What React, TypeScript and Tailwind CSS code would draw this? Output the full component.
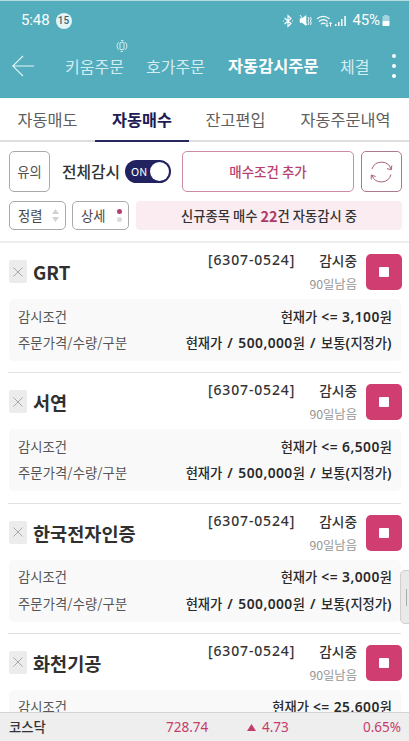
import type { ReactNode } from "react";

const orders = [
  { name: "GRT", price: "3,100" },
  { name: "서연", price: "6,500" },
  { name: "한국전자인증", price: "3,000" },
  { name: "화천기공", price: "25,600" },
];

const StatusBar = () => (
  <div className="flex h-[39px] items-center pl-[21px] pr-[19px]">
    <span className="font-['Roboto'] text-[15px] tracking-[-0.1px]">5:48</span>
    <span className="ml-[6px] flex h-4 w-4 items-center justify-center rounded-full bg-[#e4f5f7] font-['Roboto'] text-[10px] font-medium text-[#37656e]">
      15
    </span>
    <svg className="ml-auto" width="12" height="14" viewBox="0 0 12 14" fill="none" stroke="white" strokeWidth="1.1">
      <path d="M2.5 4 9 9.5 6 12.5v-11l3 3L2.5 10M1 7h1M10 7h1" />
    </svg>
    <svg className="ml-[5px]" width="13" height="13" viewBox="0 0 13 13" fill="white" stroke="white">
      <path d="M1 4.5h2L7 1.5v10L3 8.5H1z" strokeWidth=".5" />
      <path d="m1 1 7 10M9 3l1 2-1 2 1 2-1 2M11.5 3l.7 2-.7 2 .7 2-.7 2" fill="none" strokeWidth=".9" />
    </svg>
    <svg className="ml-[4px]" width="17" height="14" viewBox="0 0 17 14" fill="none" stroke="white" strokeWidth="1.2">
      <path d="M1 4.800q6-5 12.500 0M3 7.500q4.500-3.700 8.500 0M5 10.200q2.500-2 4.500 0" />
      <path d="M11 8.500v4M9.700 11.200l1.300 1.500 1.300-1.500M14.500 12.500v-4M13.200 9.800l1.300-1.500 1.300 1.500" strokeWidth="1" />
    </svg>
    <svg className="ml-[2px]" width="12" height="12" viewBox="0 0 12 12" fill="white">
      <path d="M0 9h1.500v2H0zM3 7h1.500v4H3zM6 4h1.500v7H6zM9.300 1h1.500v10H9.300z" />
    </svg>
    <span className="ml-[5px] font-['Roboto'] text-[15px] tracking-[-0.1px]">45%</span>
    <svg className="ml-[2px]" width="8" height="13" viewBox="0 0 8 13">
      <path d="M2 1h4v1h1.500v5H.5V2H2z" fill="#a2d4dc" />
      <path d="M.5 7h7v4q0 1-1 1h-5q-1 0-1-1z" fill="white" />
    </svg>
  </div>
);

const Header = () => (
  <header className="h-[98px] shrink-0 border-t border-[#b6dce2] bg-[#54adbd] text-white">
    <StatusBar />
    <nav className="flex h-[51px] items-center whitespace-nowrap pl-[12px] text-[16px] text-[#d3ecf0]">
      <svg width="22" height="22" viewBox="0 0 22 22" fill="none" stroke="#e4f5f7" strokeWidth="1.1">
        <path d="M22 11H.7M11 1 .7 11 11 21" />
      </svg>
      <span className="relative ml-[31px] w-[81px]">
        키움주문
        <svg className="absolute left-[51px] top-[-14px]" width="12" height="12" viewBox="0 0 12 12" fill="none" stroke="#d3ecf0" strokeWidth="1">
          <rect x="4" y="2.500" width="4" height="7" rx=".5" />
          <path d="M2.800 2.200a5 5 0 0 0 0 7.600M9.200 9.800a5 5 0 0 0 0-7.600M5 .6h2.500M7 11.400H4.500" />
        </svg>
      </span>
      <span className="w-[82px]">호가주문</span>
      <span className="w-[112px] text-[16.4px] font-bold text-white">자동감시주문</span>
      <span>체결</span>
      <span className="ml-auto mr-[13px] flex flex-col gap-[6px]">
        <i className="h-1 w-1 rounded-full bg-white" />
        <i className="h-1 w-1 rounded-full bg-white" />
        <i className="h-1 w-1 rounded-full bg-white" />
      </span>
    </nav>
  </header>
);

const Tabs = () => (
  <div className="flex h-[44px] shrink-0 border-b-2 border-[#dedede] text-center text-[16.3px] leading-[43px] text-[#5e5e5e]">
    <span className="w-[95px]">자동매도</span>
    <span className="h-[44px] w-[94px] border-b-2 border-[#28285f] font-bold text-[#1e1b55]">자동매수</span>
    <span className="w-[93px]">잔고편입</span>
    <span className="w-[127px]">자동주문내역</span>
  </div>
);

const OutlineButton = ({ className, children }: { className: string; children: ReactNode }) => (
  <button className={`flex shrink-0 items-center rounded-[5px] border ${className}`}>{children}</button>
);

const Toolbar = () => (
  <div className="h-[101px] shrink-0 border-b-2 border-[#eeeeee] pl-[9px] pr-[7px] pt-[9px]">
    <div className="flex h-[41px] items-center">
      <OutlineButton className="h-[41px] w-[41px] justify-center border-[#aaaaaa] text-[13.300px] text-[#505050]">유의</OutlineButton>
      <span className="ml-[12px] w-[63px] whitespace-nowrap text-[15.800px] font-medium text-[#333333]">전체감시</span>
      <span className="flex h-[23px] w-[46px] items-center justify-between rounded-full bg-[#222260] pl-[6px] pr-[2px] text-[11px] text-white">
        ON
        <i className="h-[19px] w-[19px] rounded-full bg-white" />
      </span>
      <OutlineButton className="ml-[11px] h-[41px] w-[172px] justify-center border-[#cb8ba7] text-[13.500px] font-medium text-[#b93f70]">
        매수조건 추가
      </OutlineButton>
      <OutlineButton className="ml-auto h-[41px] w-[41px] justify-center border-[#ad7990]">
        <svg width="23" height="22" viewBox="0 0 23 22" fill="none" stroke="#a8607f" strokeWidth="1">
          <path d="M2 8A10 10 0 0 1 21 8M21.800 4.500 21.300 8.800 17 7.600M21 13.500A10 10 0 0 1 2 14.500M1.300 18.500 1.200 14 5.700 15.500" />
        </svg>
      </OutlineButton>
    </div>
    <div className="mt-[9px] flex h-[29px]">
      <OutlineButton className="w-[57px] justify-between border-[#aaaaaa] pl-[8px] pr-[6px] text-[13.300px] text-[#484848]">
        정렬
        <svg width="7" height="13" viewBox="0 0 7 13" fill="#d2d2d2">
          <path d="M3.500 0 7 5H0zM3.500 13 0 8h7z" />
        </svg>
      </OutlineButton>
      <OutlineButton className="ml-[6px] w-[57px] justify-between border-[#aaaaaa] pl-[8px] pr-[6px] text-[13.300px] text-[#484848]">
        상세
        <span className="flex flex-col gap-[3px]">
          <i className="h-[5px] w-[5px] rounded-full bg-[#b33f70]" />
          <i className="h-[5px] w-[5px] rounded-full bg-[#dcdcdc]" />
        </span>
      </OutlineButton>
      <div className="ml-[7px] flex flex-1 items-center justify-center rounded-[4px] bg-[#fbecf1] text-[13.300px] font-medium whitespace-pre text-[#333333]">
        신규종목 매수 <b className="text-[14.500px] text-[#ad3b66]">22</b>건 자동감시 중
      </div>
    </div>
  </div>
);

// Latin runs are set a little wider than the Hangul around them
const Num = ({ children }: { children: ReactNode }) => (
  <span className="font-['Noto_Sans'] text-[13.800px] font-semibold tracking-[0.450px]">{children}</span>
);

const OrderCard = ({ name, price }: { name: string; price: string }) => (
  <section className="mx-[8px] h-[130.300px] shrink-0 border-b border-[#e2e2e2] pl-px pt-[11px]">
    <div className="mr-[-1px] flex h-[36px]">
      <button className="mt-[6px] flex h-[23px] w-[18px] items-center justify-center rounded-[2px] bg-[#ececec]">
        <svg width="10" height="10" viewBox="0 0 10 10" stroke="#a8a8a8" strokeWidth="1">
          <path d="m.5.5 9 9m0-9-9 9" />
        </svg>
      </button>
      <h2 className="ml-[6px] text-[18.600px] leading-[35px] font-bold text-[#303030]">{name}</h2>
      <div className="ml-auto w-[149px]">
        <div className="flex h-[14px] justify-between text-[13.700px] leading-[12px] font-medium text-[#333333]">
          <span className="font-['Noto_Sans'] text-[14px] tracking-[0.850px]">[6307-0524]</span>
          <span>감시중</span>
        </div>
        <div className="mt-[10px] text-right text-[12.300px] leading-[13px] text-[#969696]">90일남음</div>
      </div>
      <button className="ml-[9px] flex h-[36px] w-[36px] items-center justify-center rounded-[5px] bg-[#d03e71]">
        <i className="h-[10px] w-[10px] rounded-[1px] bg-white" />
      </button>
    </div>
    <dl className="mt-[9px] flex h-[62px] flex-col justify-center rounded-[5px] bg-[#f9f9f9] px-[9px] text-[13.300px] leading-[26.500px] whitespace-nowrap text-[#555555]">
      <div className="flex h-[26.500px] justify-between">
        <dt>감시조건</dt>
        <dd className="font-medium text-[#292929]">
          현재가<Num> &lt;= {price}</Num>원
        </dd>
      </div>
      <div className="flex h-[26.500px] justify-between">
        <dt className="tracking-[0.100px]">주문가격/수량/구분</dt>
        <dd className="font-medium text-[#292929] [word-spacing:1px]">
          현재가<Num> / 500,000</Num>원<Num> / </Num>보통<Num>(</Num>지정가<Num>)</Num>
        </dd>
      </div>
    </dl>
  </section>
);

const App = () => (
  <div className="relative flex h-[741px] w-[409px] flex-col overflow-hidden bg-white font-['Noto_Sans_CJK_KR',sans-serif]">
    <Header />
    <Tabs />
    <Toolbar />
    <main className="flex min-h-0 flex-1 flex-col overflow-hidden">
      {orders.map((order) => (
        <OrderCard key={order.name} {...order} />
      ))}
    </main>
    <footer className="flex h-[29px] shrink-0 items-center border-t border-[#d2d2d2] bg-[#eeeeee] pl-[9px] pr-[8px] text-[13.500px] leading-5 text-[#c43c6d]">
      <span className="w-[157px] text-[13.300px] font-medium text-[#333333]">코스닥</span>
      <span className="w-[81px] font-['Noto_Sans']">728.74</span>
      <svg width="9" height="7" viewBox="0 0 9 7" fill="#c43c6d">
        <path d="m4.500 0 4.500 7H0z" />
      </svg>
      <span className="ml-[6px] font-['Noto_Sans']">4.73</span>
      <span className="ml-auto font-['Noto_Sans']">0.65%</span>
    </footer>
    {/* drawer handle over the list */}
    <div className="absolute right-[-2px] top-[570px] flex h-[54px] w-[11px] items-center rounded-l-[5px] border border-[#cfcfcf] bg-[#e9e9e9] pl-[5px]">
      <i className="h-[17px] w-px bg-[#aaaaaa]" />
    </div>
  </div>
);

export default App;
